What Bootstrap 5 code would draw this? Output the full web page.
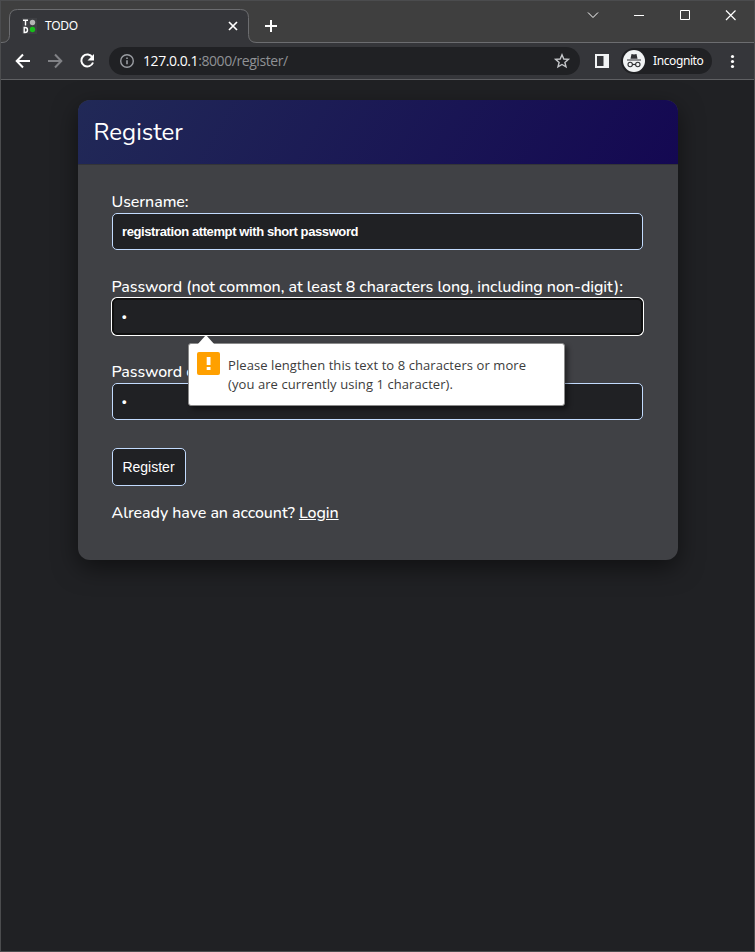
<!DOCTYPE html>
<html lang="en">
<head>
<meta charset="utf-8">
<meta name="viewport" content="width=device-width, initial-scale=1">
<title>TODO</title>
<link href="https://cdn.jsdelivr.net/npm/bootstrap@5.3.0/dist/css/bootstrap.min.css" rel="stylesheet">
<style>
body{background:#202124;color:#fff;height:952px;overflow:hidden;font-family:"Noto Sans","Open Sans",sans-serif}
svg{display:block;flex:none}
.window{height:952px;border:1px solid #4b4c4e}
.titlebar{height:42px;background:#3f3f3f}
.tab-shape{width:255px;height:42px}
.tab-face{position:absolute;left:0;top:0}
.tab-content{position:relative;height:41px;padding:8px 0 0 21px}
.tab-title{font-size:12px;letter-spacing:-.25px;margin-left:8px;line-height:16px}
.strip{border-bottom:1px solid #6c6d70}
.toolbar{height:37px;background:#35363a;border-bottom:1px solid #5f6063}
.address{width:471px;height:28px;background:#202124;border-radius:14px;margin-left:13px}
.url{font-family:"Open Sans","Noto Sans",sans-serif;font-size:14px;letter-spacing:-.43px;line-height:18px;margin-left:9px;color:#8f9195}
.incog{width:91px;height:26px;border-radius:13px;background:#202124;margin-left:11px;font-size:12px}
.incog-label{letter-spacing:-.4px;margin-left:6px}
.panel{width:600px;height:460px;margin:20px 0 0 77px;border-radius:12px;background:#404145;box-shadow:0 8px 24px rgba(0,0,0,.5)}
.panel-head{height:65px;border-bottom:1px solid #333438;border-radius:12px 12px 0 0;background:linear-gradient(120deg,#212957,#140852);padding:0 15.500px}
.panel-head h1{font:400 24px/64px Nunito,Lato,sans-serif;margin:0;letter-spacing:.03px}
.panel-main{padding:24px 35px 0 34px;font:500 16px/24px Nunito,Lato,sans-serif;letter-spacing:-.06px}
.group{height:85px}
.group label{display:block;height:24px;line-height:26px;margin-left:-.5px;white-space:nowrap}
.field{display:block;width:100%;height:37px;padding:0 9px;border:1px solid #c2dbfe;border-radius:5px;background:#202124;color:#fff;font:700 13px "Liberation Sans",Arial,sans-serif;letter-spacing:-.4px;outline:0}
.field.active{border:1px solid #101010;box-shadow:inset 0 0 0 1px #101010,0 0 0 1px #fff}
.submit{display:block;width:74px;height:38px;margin-top:4px;padding:0 1px 0 0;border:1px solid #c2dbfe;border-radius:5px;background:#202124;color:#fff;font:400 14px "Liberation Sans",Arial,sans-serif}
.account{margin:15px 0 0 -.5px;line-height:24px}
.account a{color:#fff;text-underline-offset:1px}
.bubble{position:absolute;left:76px;top:69px;width:377px;height:63px;padding:8px;background:#fff;border:1px solid #8a8a8a;border-radius:3px;box-shadow:3px 3px 5px rgba(0,0,0,.45);color:#3c3c3c;z-index:2}
.bubble-tip{position:absolute;left:8px;top:-9px}
.bubble p{margin:4px 0 0 8px;font:400 13px/19px "Open Sans","Noto Sans",sans-serif;letter-spacing:.08px;white-space:nowrap}
</style>
</head>
<body>
<div class="window">
  <header>
    <div class="titlebar d-flex">
      <div class="tab-shape position-relative">
        <svg class="tab-face" width="255" height="42" viewBox="1 1 255 42"><path d="M1 42.500h1q7 0 7.500-7V18q0-8.500 8-8.500h223q8 0 8 8v17q0 8 8 8h3V44H1z" fill="#35363a"/><path d="M1 42.500h1q7 0 7.500-7V18q0-8.500 8-8.500h223q8 0 8 8v17q0 8 8 8h3" fill="none" stroke="#6c6d70"/></svg>
        <div class="tab-content d-flex align-items-center">
          <svg width="15" height="16" viewBox="0 0 15 16"><path fill="#3e3f43" d="M0 0h15v16H0z"/><path d="M1 2.200h5M3.500 2v5.500M2.200 9.500v5M1.500 9.500H3q2.500 0 2.500 2.500T3 14.500H1.500" stroke="#fff" stroke-width="1.400" fill="none"/><circle cx="10.500" cy="4.500" r="2.700" fill="#b5b5b5"/><circle cx="10.500" cy="11.500" r="2.700" fill="#17bd1a"/></svg>
          <span class="tab-title">TODO</span>
          <svg class="ms-auto me-3" width="14" height="12"><path d="M3 2l8 8M11 2l-8 8" stroke="#fff" stroke-width="1.700"/></svg>
        </div>
      </div>
      <div class="strip flex-fill d-flex">
        <svg width="498" height="40" viewBox="256 1 498 40"><g fill="none" stroke="#fff"><path d="M265 26h12M271 20v12" stroke-width="2"/><path d="M588 12.500l5 5 5-5"/><path d="M634 15.500h10M680.500 10.500h9v9h-9z"/><path d="M726 10.500l9.500 9.500M735.500 10.500L726 20" stroke-width="1.200"/></g></svg>
      </div>
    </div>
    <div class="toolbar d-flex align-items-center">
      <svg width="95" height="36" viewBox="1 43 95 36"><g fill="none" stroke-width="2"><path d="M30 61H17M23 54.500L16.700 61l6.300 6.500" stroke="#fff"/><path d="M48 61h13M55 54.500l6.300 6.500-6.300 6.500" stroke="#818286"/><path d="M92.400 57.300A6 6 0 1 0 93 62.500" stroke="#fff"/></g><path d="M94 54v6.500h-6.500z" fill="#fff"/></svg>
      <div class="address d-flex align-items-center">
        <svg class="ms-2" width="17" height="16" viewBox="0 0 17 16"><circle cx="10" cy="8" r="6.300" fill="none" stroke="#9a9da2" stroke-width="1.400"/><path d="M10 7.200v4M10 4.500V6" stroke="#9a9da2" stroke-width="1.600"/></svg>
        <span class="url"><span class="text-white">127.0.0.1</span>:8000/register/</span>
        <svg class="ms-auto me-2" width="20" height="16" viewBox="0 0 20 16"><path d="M10 1.800l1.800 4.200 4.600.4-3.500 3 1.100 4.500-4-2.400-4 2.400 1.100-4.500-3.500-3 4.600-.4z" fill="none" stroke="#c5c7ca" stroke-width="1.400"/></svg>
      </div>
      <svg width="30" height="16" viewBox="580 53 30 16"><path d="M595 54h14v14h-14zm2 2v10h6.500V56z" fill="#f1f3f4" fill-rule="evenodd"/></svg>
      <div class="incog d-flex align-items-center">
        <svg width="26" height="24" viewBox="-1 0 26 24"><circle cx="12" cy="12" r="11" fill="#f1f3f4"/><path d="M8.500 9.800l1-4.800 2.500.6 2.500-.6 1 4.800z" fill="#303134"/><path d="M5 11h14M10.300 15.800q1.700-.9 3.400 0" stroke="#303134" fill="none" stroke-width="1.200"/><g fill="none" stroke="#303134" stroke-width="1.100"><circle cx="8.200" cy="15.500" r="2.200"/><circle cx="15.800" cy="15.500" r="2.200"/></g></svg>
        <span class="incog-label">Incognito</span>
      </div>
      <svg width="40" height="16" viewBox="712 53 40 16"><g fill="#fff"><circle cx="732.500" cy="56.500" r="1.600"/><circle cx="732.500" cy="61.500" r="1.600"/><circle cx="732.500" cy="66.500" r="1.600"/></g></svg>
    </div>
  </header>
  <main class="panel">
    <div class="panel-head"><h1>Register</h1></div>
    <form class="panel-main" novalidate>
      <div class="group"><label for="user">Username:</label><input class="field" id="user" value="registration attempt with short password"></div>
      <div class="group position-relative"><label for="pass">Password (not common, at least 8 characters long, including non-digit):</label><input class="field active" id="pass" type="password" value="a">
        <div class="bubble d-flex align-items-start">
          <svg class="bubble-tip" width="18" height="10"><path d="M0 10L9 0l9 10z" fill="#fff"/></svg>
          <svg width="23" height="23"><rect width="23" height="23" rx="2" fill="#ffa000"/><path d="M9.700 5h3.800v8H9.700zM9.700 15h3.800v3H9.700z" fill="#fff"/></svg>
          <p>Please lengthen this text to 8 characters or more<br>(you are currently using 1 character).</p>
        </div>
      </div>
      <div class="group"><label for="again">Password c</label><input class="field" id="again" type="password" value="a"></div>
      <button class="submit" type="button">Register</button>
      <p class="account">Already have an account? <a href="#">Login</a></p>
    </form>
  </main>
</div>
<script src="https://cdn.jsdelivr.net/npm/bootstrap@5.3.0/dist/js/bootstrap.bundle.min.js"></script>
</body>
</html>
